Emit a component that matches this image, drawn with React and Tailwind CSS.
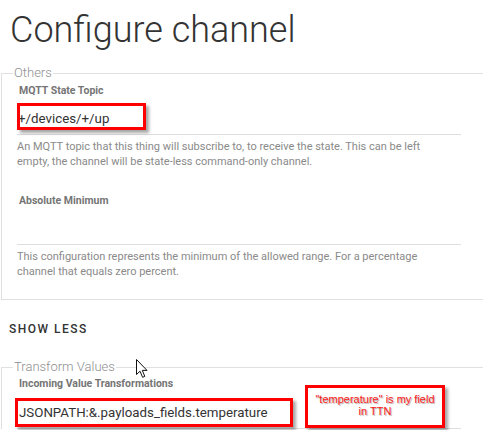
import React from 'react';

function Field({ label, children, desc }) {
  return (
    <div>
      <div className="h-[14px] pl-[2px] text-[10.5px] leading-[14px] font-bold text-[#757575]">{label}</div>
      {children}
      {desc && (
        <p className="mt-[4px] pr-[16px] text-[11px] leading-[15px] text-[#8a8a8a]">{desc}</p>
      )}
    </div>
  );
}

function Cursor() {
  return (
    <svg className="absolute left-[136px] top-[359px]" width="13" height="20" viewBox="0 0 13 20">
      <path
        d="M0.5 0.5 L0.5 15.5 L4 12.2 L6.6 18.3 L8.8 17.4 L6.3 11.4 L11 11.4 Z"
        fill="#fff"
        stroke="#111"
        strokeWidth="1"
        strokeLinejoin="round"
      />
    </svg>
  );
}

export default function App() {
  return (
    <div className="relative w-[483px] h-[430px] overflow-hidden bg-white font-['Roboto',sans-serif]">
      <h1 className="pt-[6px] pl-[10px] h-[54px] text-[36px] leading-[48px] font-light text-[#333]">
        Configure channel
      </h1>

      {/* Others */}
      <fieldset className="mt-[11px] ml-px border-t border-l border-b border-[#e0e0e0] pb-[20px]">
        <legend className="ml-[11px] px-px text-[13px] leading-[16px] font-light text-[#8f8f8f]">Others</legend>
        <div className="pt-[3px] pl-[15px] pr-[22px]">
          <Field
            label="MQTT State Topic"
            desc="An MQTT topic that this thing will subscribe to, to receive the state. This can be left empty, the channel will be state-less command-only channel."
          >
            <div className="relative h-[37px] pt-[11px] pl-px border-b border-[#dedede] text-[13.3px] leading-[20px] text-[#333]">
              +/devices/+/up
              <div className="absolute left-0 top-[5px] w-[129px] h-[27px] border-[3px] border-[#ff0000] shadow-[3px_3px_3px_rgba(0,0,0,0.35)]" />
            </div>
          </Field>
          <div className="h-[25px]" />
          <Field
            label="Absolute Minimum"
            desc="This configuration represents the minimum of the allowed range. For a percentage channel that equals zero percent."
          >
            <div className="h-[37px] border-b border-[#dedede]" />
          </Field>
        </div>
      </fieldset>

      <div className="mt-[21px] pl-[9px] text-[12px] leading-[16px] font-medium tracking-[1.5px] text-[#333]">
        SHOW LESS
      </div>

      {/* Transform Values */}
      <fieldset className="mt-[22px] ml-px border-t border-l border-[#e0e0e0]">
        <legend className="ml-[11px] px-px text-[13px] leading-[16px] font-light text-[#8f8f8f]">Transform Values</legend>
        <div className="pt-[2px] pl-[15px] pr-[22px]">
          <Field label="Incoming Value Transformations">
            <div className="relative h-[38px] pt-[12px] pl-[2px] border-b border-[#dedede] text-[13.3px] leading-[20px] text-[#333]">
              JSONPATH:&amp;.payloads_fields.temperature
              <div className="absolute left-[-2px] top-[7px] w-[278px] h-[29px] border-[3px] border-[#ff0000] shadow-[3px_3px_3px_rgba(0,0,0,0.35)]" />
              <div className="absolute left-[288px] top-[-6px] w-[140px] h-[43px] flex flex-col items-center pt-[5px] bg-white border-[3px] border-[#ff0000] shadow-[3px_3px_3px_rgba(0,0,0,0.35)] font-['Liberation_Sans',Arial,sans-serif] text-[11px] leading-[12px] text-[#ff1a1a] [text-shadow:1px_1px_1px_rgba(0,0,0,0.35)]">
                <span>"temperature" is my field</span>
                <span>in TTN</span>
              </div>
            </div>
          </Field>
        </div>
      </fieldset>

      <Cursor />
    </div>
  );
}
